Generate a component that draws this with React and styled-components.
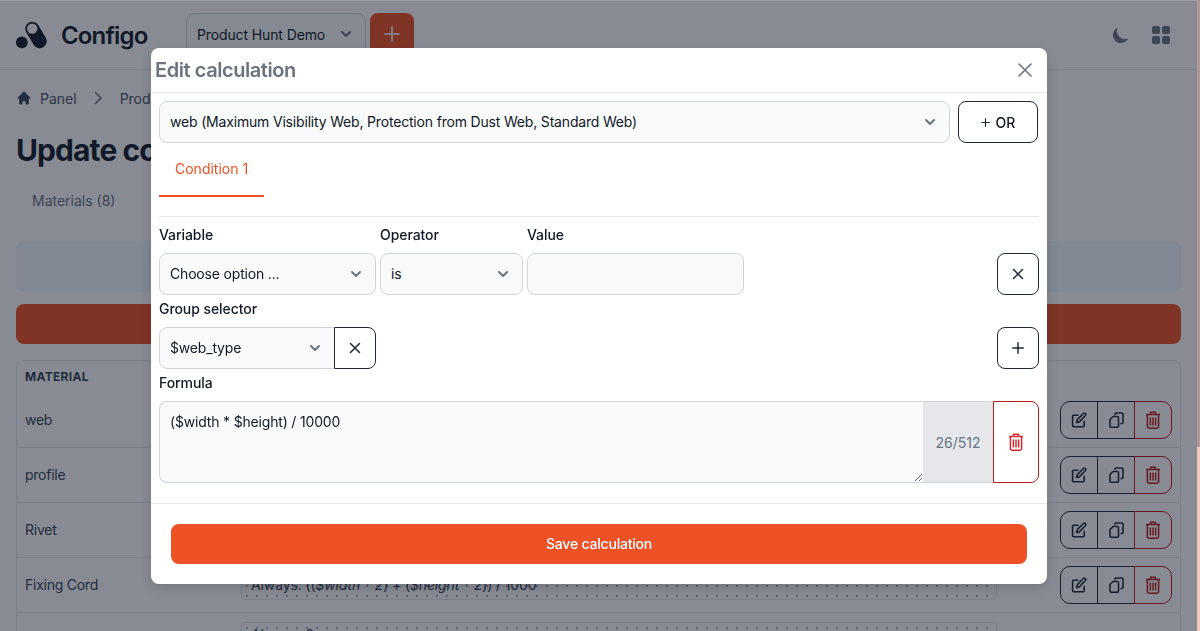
import styled, { createGlobalStyle } from "styled-components";

const GlobalStyle = createGlobalStyle`
  html, body {
    margin: 0;
    height: 100%;
    overflow: hidden;
    background: #fff;
    font-family: Inter, "Liberation Sans", sans-serif;
    font-size: 14px;
    color: #111827;
  }
  * { box-sizing: border-box; }
`;

const ORANGE = "#ee5125";
const RED = "#b91c1c";

// icons
const Chevron = ({ size = 20, color = "#6b7280" }) => (
  <svg width={size} height={size} viewBox="0 0 20 20" fill="none" stroke={color} strokeWidth="2" strokeLinecap="round" strokeLinejoin="round">
    <path d="M6 8l4 4 4-4" />
  </svg>
);

const XIcon = ({ size = 12, color = "#1f2937", width = 1.5 }) => (
  <svg width={size} height={size} viewBox="0 0 12 12" fill="none" stroke={color} strokeWidth={width} strokeLinecap="round">
    <path d="M1.5 1.5l9 9M10.5 1.5l-9 9" />
  </svg>
);

const PlusIcon = ({ size = 12, color = "#1f2937", width = 1.5 }) => (
  <svg width={size} height={size} viewBox="0 0 12 12" fill="none" stroke={color} strokeWidth={width} strokeLinecap="round">
    <path d="M6 .8v10.4M.8 6h10.4" />
  </svg>
);

const TrashIcon = ({ color }) => (
  <svg width="16" height="18" viewBox="0 0 16 18" fill="none" stroke={color} strokeWidth="1.5" strokeLinejoin="round">
    <path d="M5.5 3V1.2h5V3M1 3.5h14M2.4 3.5v12a1.7 1.7 0 001.7 1.7h7.8a1.7 1.7 0 001.7-1.7v-12M5.4 6.5v8M8 6.5v8M10.6 6.5v8" />
  </svg>
);

const EditIcon = () => (
  <svg width="16" height="16" viewBox="0 0 16 16" fill="none" stroke="#1f2937" strokeWidth="1.6" strokeLinejoin="round" strokeLinecap="round">
    <path d="M7 3.2H2.6a1 1 0 00-1 1v9.6a1 1 0 001 1h9.6a1 1 0 001-1V9.4" />
    <path d="M5.6 10.6l.7-3L12.4 1.5a1.4 1.4 0 012 2L8.3 9.9z" />
  </svg>
);

const CopyIcon = () => (
  <svg width="15" height="16" viewBox="0 0 15 16" fill="none" stroke="#1f2937" strokeWidth="1.6" strokeLinejoin="round">
    <path d="M6 3V2a1 1 0 011-1h6a1 1 0 011 1v8.5a1 1 0 01-1 1h-1.5" />
    <path d="M4 4.5h4.5a1 1 0 011 1v8.7a1 1 0 01-1 1H2a1 1 0 01-1-1V7.5z" />
  </svg>
);

const Logo = () => (
  <svg width="32" height="28" viewBox="0 0 32 28">
    <circle cx="5.8" cy="21.3" r="5.9" fill="#111827" />
    <path d="M10.2 11.2a7 7 0 0112-7.2l7.6 12.8a7 7 0 01-12 7.2z" fill="#111827" />
    <circle cx="16.2" cy="7.6" r="5.2" fill="#fff" />
  </svg>
);

// background page
const Page = styled.div`
  padding: 0 19px 0 16px;
`;

const TopBar = styled.header`
  display: flex;
  align-items: flex-start;
  height: 70px;
  margin: 0 -19px 0 -16px;
  padding: 13px 16px 0;
  border-bottom: 1px solid #e5e7eb;
`;

const Brand = styled.div`
  display: flex;
  align-items: center;
  gap: 13px;
  width: 170px;
  height: 44px;
  font-size: 24px;
  font-weight: 600;
  letter-spacing: -0.85px;
`;

const ProjectSelect = styled.div`
  display: flex;
  align-items: center;
  justify-content: space-between;
  width: 180px;
  height: 42px;
  padding: 0 9px 0 10px;
  background: #f9fafb;
  border: 1px solid #d1d5db;
  border-radius: 8px;
  color: #111827;
  letter-spacing: -0.12px;
`;

const AddProject = styled.div`
  display: flex;
  align-items: center;
  justify-content: center;
  width: 44px;
  height: 42px;
  margin-left: 4px;
  background: ${ORANGE};
  border-radius: 8px;
`;

const TopActions = styled.div`
  display: flex;
  align-items: center;
  gap: 21px;
  height: 44px;
  margin-left: auto;
  margin-right: 14px;
`;

const Crumbs = styled.nav`
  display: flex;
  align-items: center;
  gap: 8px;
  margin-top: 18px;
  height: 20px;
  color: #4b5563;
`;

const CrumbSep = styled.span`
  display: flex;
  margin: 0 7px 0 6px;
`;

const Heading = styled.h1`
  margin: 24px 0 0;
  font-size: 30px;
  line-height: 36px;
  font-weight: 700;
  letter-spacing: -0.9px;
`;

const PageTabs = styled.div`
  margin-top: 23px;
  padding-left: 16px;
  line-height: 20px;
  color: #6b7280;
`;

const InfoBox = styled.div`
  height: 51px;
  margin-top: 30px;
  background: #f0f6ff;
  border-radius: 8px;
`;

const AddMaterial = styled.div`
  height: 40px;
  margin-top: 12px;
  background: ${ORANGE};
  border-radius: 8px;
`;

const Table = styled.div`
  margin-top: 16px;
  border: 1px solid #e5e7eb;
  border-radius: 8px 8px 0 0;
`;

const TableHead = styled.div`
  display: flex;
  align-items: center;
  height: 32px;
  padding: 0 8px 2px;
  font-size: 12px;
  font-weight: 700;
  letter-spacing: 0.3px;
  color: #374151;
`;

const Row = styled.div`
  display: grid;
  grid-template-columns: 216px 756px 1fr;
  align-items: center;
  height: ${(p) => (p.$tall ? "100px" : "55px")};
  padding: 0 8px;
  border-bottom: 1px solid #e5e7eb;
  color: #374151;
`;

const RowName = styled.span`
  padding-bottom: 2px;
  letter-spacing: -0.25px;
`;

const Pill = styled.div`
  height: ${(p) => (p.$tall ? "82px" : "30px")};
  padding: ${(p) => (p.$tall ? "2px 9px 0" : "0 9px")};
  border: 1px solid #e5e7eb;
  border-radius: 4px;
  line-height: ${(p) => (p.$tall ? "20px" : "28px")};
  letter-spacing: -0.12px;
  color: #374151;
  background-image: radial-gradient(#adb2bb 1px, transparent 1.2px);
  background-size: 10px 10px;
`;

const FormulaVar = styled.em`
  font-style: italic;
`;

const ActionGroup = styled.div`
  display: flex;
  justify-self: end;
  height: 38px;
`;

const ActionBtn = styled.button`
  display: flex;
  align-items: center;
  justify-content: center;
  width: 38px;
  margin-left: -1px;
  padding: 0;
  background: transparent;
  border: 1px solid ${(p) => (p.$danger ? RED : "#1f2937")};
  border-radius: ${(p) => (p.$danger ? "0 10px 10px 0" : p.$first ? "10px 0 0 10px" : "0")};
`;

// modal
const Overlay = styled.div`
  position: fixed;
  inset: 0;
  display: flex;
  justify-content: center;
  padding: 47px 2px 0 0;
  background: rgba(17, 24, 39, 0.5);
  border-top: 1px solid rgba(255, 255, 255, 0.15);
`;

const EdgeStrip = styled.div`
  position: fixed;
  top: 0;
  right: 0;
  bottom: 0;
  width: 3px;
  background: linear-gradient(#ac9696 0 447px, #f3c8be 447px);
`;

const Modal = styled.div`
  width: 896px;
  height: 536px;
  background: #fff;
  border-radius: 8px;
  box-shadow: 0 4px 12px rgba(0, 0, 0, 0.15);
`;

const ModalHeader = styled.div`
  display: flex;
  align-items: center;
  justify-content: space-between;
  height: 45px;
  padding: 0 14px 0 4px;
  border-bottom: 1px solid #e5e7eb;
`;

const ModalTitle = styled.h2`
  margin: 0;
  font-size: 20px;
  font-weight: 600;
  letter-spacing: -0.44px;
  color: #6b7280;
`;

const CloseBtn = styled.button`
  display: flex;
  padding: 0;
  background: none;
  border: 0;
`;

const ModalBody = styled.div`
  padding: 8px 8px 20px;
  border-bottom: 1px solid #e5e7eb;
`;

const TopRow = styled.div`
  display: flex;
  gap: 8px;
  padding-right: 1px;
`;

const SelectBox = styled.div`
  display: flex;
  align-items: center;
  justify-content: space-between;
  flex: ${(p) => (p.$grow ? 1 : "none")};
  width: ${(p) => p.$w || "auto"};
  height: 42px;
  padding: 0 9px 2px 10px;
  background: #f9fafb;
  border: 1px solid #d1d5db;
  border-radius: ${(p) => (p.$joined ? "8px 0 0 8px" : "8px")};
  color: #111827;
  letter-spacing: -0.18px;

  svg {
    margin-top: 2px;
  }
`;

const OutlineBtn = styled.button`
  display: flex;
  align-items: center;
  justify-content: center;
  gap: 6px;
  flex: none;
  width: ${(p) => p.$w || "42px"};
  height: 42px;
  padding: 0;
  background: #fff;
  border: 1px solid #1f2937;
  border-radius: ${(p) => (p.$joined ? "0 8px 8px 0" : "8px")};
  margin-left: ${(p) => (p.$joined ? "-1px" : "0")};
  font: 500 14px Inter, "Liberation Sans", sans-serif;
  color: #111827;
`;

const TabBar = styled.div`
  padding-bottom: 19px;
  border-bottom: 1px solid #e5e7eb;
`;

const Tab = styled.div`
  width: 105px;
  padding: 16px;
  line-height: 20px;
  color: ${ORANGE};
  border-bottom: 2px solid ${ORANGE};
  white-space: nowrap;
`;

const ConditionGrid = styled.div`
  display: grid;
  grid-template-columns: 217px 143px 217px 1fr;
  gap: 8px 4px;
  padding-top: 8px;
`;

const FieldLabel = styled.label`
  display: block;
  line-height: 20px;
  font-weight: 500;
  letter-spacing: -0.07px;
  color: #111827;
`;

const ValueInput = styled.input`
  width: 100%;
  height: 42px;
  background: #f9fafb;
  border: 1px solid #d1d5db;
  border-radius: 8px;
`;

const EndCell = styled.div`
  display: flex;
  justify-content: flex-end;
`;

const StackLabel = styled(FieldLabel)`
  margin: 4px 0 8px;
`;

const SplitRow = styled.div`
  display: flex;
  justify-content: space-between;
`;

const Joined = styled.div`
  display: flex;
`;

const FormulaRow = styled.div`
  display: flex;
  height: 82px;
`;

const FormulaInput = styled.textarea`
  flex: 1;
  height: 82px;
  padding: 10px;
  background: #f9fafb;
  border: 1px solid #d1d5db;
  border-right: 0;
  border-radius: 8px 0 0 8px;
  font: 14px/20px Inter, "Liberation Sans", sans-serif;
  letter-spacing: -0.18px;
  color: #111827;
  outline: none;
`;

const Counter = styled.div`
  display: flex;
  align-items: center;
  justify-content: center;
  width: 70px;
  background: #e5e7eb;
  border: 1px solid #d1d5db;
  border-width: 1px 0;
  color: #6b7280;
`;

const DeleteBtn = styled.button`
  display: flex;
  align-items: center;
  justify-content: center;
  width: 46px;
  padding: 0;
  background: #fff;
  border: 1px solid ${RED};
  border-radius: 0 8px 8px 0;
`;

const ModalFooter = styled.div`
  padding: 20px;
`;

const SaveBtn = styled.button`
  display: block;
  width: 100%;
  height: 40px;
  padding: 0 0 2px;
  background: ${ORANGE};
  border: 0;
  border-radius: 8px;
  font: 500 14px Inter, "Liberation Sans", sans-serif;
  letter-spacing: -0.2px;
  color: #fff;
`;

const materials = [
  { name: "web", formula: <>Always: (<FormulaVar>$width * $height</FormulaVar>) / 10000</> },
  { name: "profile", formula: <>Always: (<FormulaVar>$width * 2</FormulaVar>) / 1000</> },
  { name: "Rivet", formula: <>Always: 4</> },
  { name: "Fixing Cord", formula: <>Always: ((<FormulaVar>$width * 2</FormulaVar>) + (<FormulaVar>$height * 2</FormulaVar>)) / 1000</> },
  { name: "Bracket", formula: <>Always: 2</>, tall: true },
];

const App = () => (
  <>
    <GlobalStyle />
    <Page>
      <TopBar>
        <Brand>
          <Logo />
          Configo
        </Brand>
        <ProjectSelect>
          Product Hunt Demo
          <Chevron />
        </ProjectSelect>
        <AddProject>
          <PlusIcon size={16} color="#fff" width={1.2} />
        </AddProject>
        <TopActions>
          <svg width="20" height="20" viewBox="0 0 20 20" fill="#6b7280">
            <path d="M17.293 13.293A8 8 0 016.707 2.707a8.001 8.001 0 1010.586 10.586z" />
          </svg>
          <svg width="18" height="18" viewBox="0 0 18 18" fill="#6b7280">
            <rect width="8" height="8" rx="2" />
            <rect x="10" width="8" height="8" rx="2" />
            <rect y="10" width="8" height="8" rx="2" />
            <rect x="10" y="10" width="8" height="8" rx="2" />
          </svg>
        </TopActions>
      </TopBar>
      <Crumbs>
        <svg width="16" height="16" viewBox="0 0 20 20" fill="#374151">
          <path d="M10.707 2.293a1 1 0 00-1.414 0l-7 7a1 1 0 001.414 1.414L4 10.414V17a1 1 0 001 1h2a1 1 0 001-1v-2a1 1 0 011-1h2a1 1 0 011 1v2a1 1 0 001 1h2a1 1 0 001-1v-6.586l.293.293a1 1 0 001.414-1.414l-7-7z" />
        </svg>
        Panel
        <CrumbSep>
          <svg width="14" height="14" viewBox="0 0 14 14" fill="none" stroke="#6b7280" strokeWidth="1.6" strokeLinecap="round" strokeLinejoin="round">
            <path d="M4.5 1.5L10 7l-5.5 5.5" />
          </svg>
        </CrumbSep>
        Products
      </Crumbs>
      <Heading>Update configuration</Heading>
      <PageTabs>Materials (8)</PageTabs>
      <InfoBox />
      <AddMaterial />
      <Table>
        <TableHead>MATERIAL</TableHead>
        {materials.map((m) => (
          <Row key={m.name} $tall={m.tall}>
            <RowName>{m.name}</RowName>
            <Pill $tall={m.tall}>{m.formula}</Pill>
            <ActionGroup>
              <ActionBtn $first><EditIcon /></ActionBtn>
              <ActionBtn><CopyIcon /></ActionBtn>
              <ActionBtn $danger><TrashIcon color={RED} /></ActionBtn>
            </ActionGroup>
          </Row>
        ))}
      </Table>
    </Page>

    <Overlay>
      <Modal>
        <ModalHeader>
          <ModalTitle>Edit calculation</ModalTitle>
          <CloseBtn><XIcon size={16} color="#6b7280" width={1.2} /></CloseBtn>
        </ModalHeader>
        <ModalBody>
          <TopRow>
            <SelectBox $grow>
              web (Maximum Visibility Web, Protection from Dust Web, Standard Web)
              <Chevron />
            </SelectBox>
            <OutlineBtn $w="80px">
              <PlusIcon size={9} width={1.4} />
              OR
            </OutlineBtn>
          </TopRow>
          <TabBar>
            <Tab>Condition 1</Tab>
          </TabBar>
          <ConditionGrid>
            <FieldLabel>Variable</FieldLabel>
            <FieldLabel>Operator</FieldLabel>
            <FieldLabel>Value</FieldLabel>
            <span />
            <SelectBox>
              Choose option ...
              <Chevron />
            </SelectBox>
            <SelectBox>
              is
              <Chevron />
            </SelectBox>
            <ValueInput />
            <EndCell>
              <OutlineBtn><XIcon size={12} /></OutlineBtn>
            </EndCell>
          </ConditionGrid>
          <StackLabel>Group selector</StackLabel>
          <SplitRow>
            <Joined>
              <SelectBox $w="176px" $joined>
                $web_type
                <Chevron />
              </SelectBox>
              <OutlineBtn $joined><XIcon size={12} /></OutlineBtn>
            </Joined>
            <OutlineBtn><PlusIcon size={12} /></OutlineBtn>
          </SplitRow>
          <StackLabel>Formula</StackLabel>
          <FormulaRow>
            <FormulaInput readOnly value="($width * $height) / 10000" />
            <Counter>26/512</Counter>
            <DeleteBtn><TrashIcon color="#d42a35" /></DeleteBtn>
          </FormulaRow>
        </ModalBody>
        <ModalFooter>
          <SaveBtn>Save calculation</SaveBtn>
        </ModalFooter>
      </Modal>
    </Overlay>
    <EdgeStrip />
  </>
);

export default App;
